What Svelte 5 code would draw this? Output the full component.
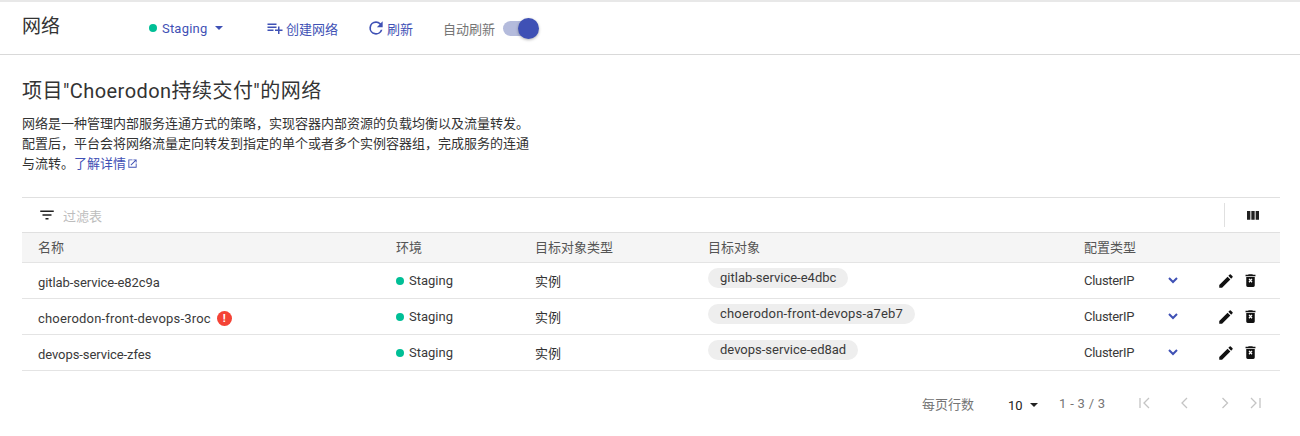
<script>
  const rows = [
    { name: 'gitlab-service-e82c9a', target: 'gitlab-service-e4dbc' },
    { name: 'choerodon-front-devops-3roc', target: 'choerodon-front-devops-a7eb7', error: true },
    { name: 'devops-service-zfes', target: 'devops-service-ed8ad' }
  ];
</script>

<div class="page">
  <header class="bar">
    <h1>网络</h1>
    <button class="env"><span class="dot"></span>Staging<svg class="caret" width="8" height="4" viewBox="0 0 8 4"><path d="M0 0h8L4 4z" fill="#3f51b5"/></svg></button>
    <button class="act create">
      <svg width="18" height="18" viewBox="0 0 24 24"><path fill="#3f51b5" d="M14 10H2v2h12v-2zm0-4H2v2h12V6zm4 8v-4h-2v4h-4v2h4v4h2v-4h4v-2h-4zM2 16h8v-2H2v2z"/></svg>创建网络
    </button>
    <button class="act refresh">
      <svg width="20" height="20" viewBox="0 0 24 24"><path fill="#3f51b5" d="M17.65 6.35A7.95 7.95 0 0 0 12 4a8 8 0 1 0 7.73 10h-2.08A6 6 0 1 1 12 6c1.66 0 3.14.69 4.22 1.78L13 11h7V4l-2.35 2.35z"/></svg>刷新
    </button>
    <div class="auto">
      <span>自动刷新</span>
      <span class="track"><span class="knob"></span></span>
    </div>
  </header>

  <main>
    <h2>项目"Choerodon持续交付"的网络</h2>
    <p class="desc">
      网络是一种管理内部服务连通方式的策略，实现容器内部资源的负载均衡以及流量转发。<br />
      配置后，平台会将网络流量定向转发到指定的单个或者多个实例容器组，完成服务的连通<br />
      与流转。<a href="#more">了解详情<svg width="11" height="11" viewBox="0 0 24 24"><path fill="#3f51b5" d="M19 19H5V5h7V3H3v18h18v-9h-2v7zM14 3v2h3.59l-9.83 9.83 1.41 1.41L19 6.41V10h2V3h-7z"/></svg></a>
    </p>

    <section class="table">
      <div class="filter">
        <svg width="18" height="18" viewBox="0 0 24 24"><path fill="#212121" d="M10 18h4v-2h-4v2zM3 6v2h18V6H3zm3 7h12v-2H6v2z"/></svg>
        <span class="ph">过滤表</span>
        <span class="sep"></span>
        <svg class="cols" width="16" height="16" viewBox="0 0 24 24"><path fill="#212121" d="M3 6h5v13H3zM9.5 6h5v13h-5zM16 6h5v13h-5z"/></svg>
      </div>
      <div class="row head">
        <div>名称</div><div>环境</div><div>目标对象类型</div><div>目标对象</div><div>配置类型</div>
      </div>
      {#each rows as r}
        <div class="row" class:wide={r.error}>
          <div class="name"><span class="label">{r.name}</span>{#if r.error}<span class="err">!</span>{/if}</div>
          <div class="envc"><span class="dot"></span>Staging</div>
          <div class="kind">实例</div>
          <div><span class="chip">{r.target}</span></div>
          <div class="cfg">
            <span class="type">ClusterIP</span>
            <svg class="chev" width="10" height="7" viewBox="0 0 10 7"><path d="M1 1l4 4 4-4" fill="none" stroke="#3f51b5" stroke-width="2"/></svg>
            <svg class="edit" width="18" height="18" viewBox="0 0 24 24"><path fill="#111" d="M3 17.25V21h3.75L17.81 9.94l-3.75-3.75L3 17.25zM20.71 7.04a1 1 0 0 0 0-1.41l-2.34-2.34a1 1 0 0 0-1.41 0l-1.83 1.83 3.75 3.75 1.83-1.83z"/></svg>
            <svg class="del" width="17" height="17" viewBox="0 0 24 24"><path fill="#111" d="M15.5 4l-1-1h-5l-1 1H5v2h14V4h-3.5zM6 19a2 2 0 0 0 2 2h8a2 2 0 0 0 2-2V7H6v12zm3.2-8.6l1.4-1.4L12 10.6 13.4 9l1.4 1.4-1.6 1.6 1.6 1.6-1.4 1.4-1.4-1.6-1.4 1.6-1.4-1.4 1.6-1.6-1.6-1.6z"/></svg>
          </div>
        </div>
      {/each}
      <div class="pager">
        <span class="rpp">每页行数</span>
        <span class="size">10<svg width="8" height="4" viewBox="0 0 8 4"><path d="M0 0h8L4 4z" fill="#222"/></svg></span>
        <span class="range">1 - 3 / 3</span>
        <span class="navs">
          <svg width="14" height="14" viewBox="0 0 14 14"><path d="M2 2v10M11 2L6 7l5 5" fill="none" stroke="#c4c4c4" stroke-width="1.3"/></svg>
          <svg width="14" height="14" viewBox="0 0 14 14"><path d="M9 2L4 7l5 5" fill="none" stroke="#c4c4c4" stroke-width="1.3"/></svg>
          <svg width="14" height="14" viewBox="0 0 14 14"><path d="M4.5 2l5 5-5 5" fill="none" stroke="#c4c4c4" stroke-width="1.3"/></svg>
          <svg class="last" width="14" height="14" viewBox="0 0 14 14"><path d="M3 2l5 5-5 5M12 2v10" fill="none" stroke="#c4c4c4" stroke-width="1.3"/></svg>
        </span>
      </div>
    </section>
  </main>
</div>

<style>
  :global(body) { margin: 0; background: #fff; }
  .page {
    width: 1300px; height: 436px; overflow: hidden; box-sizing: border-box;
    font-family: Roboto, "Noto Sans CJK SC", sans-serif;
    font-size: 13px; color: #3a3a3a; border-top: 2px solid #e8e8e8;
  }
  .bar {
    height: 53px; box-sizing: border-box; border-bottom: 1px solid #d9d9d9;
    display: flex; align-items: center; padding-left: 22px;
  }
  h1 { margin: 0 0 7px; width: 127px; font-size: 19px; font-weight: 400; color: #333; }
  button {
    border: 0; background: none; padding: 0; font: inherit; color: #3f51b5;
    display: inline-flex; align-items: center;
  }
  .env { width: 116.5px; letter-spacing: .2px; }
  .dot { width: 8px; height: 8px; border-radius: 50%; background: #00bf96; margin-right: 5px; display: inline-block; }
  .caret { margin-left: 8px; }
  .create { width: 100.8px; }
  .create svg { margin-right: 2.5px; }
  .refresh { width: 76.7px; }
  .refresh svg { margin-right: .7px; }
  .auto { display: flex; align-items: center; color: #757575; }
  .track { width: 35px; height: 15px; border-radius: 8px; background: #b4bbdc; margin-left: 8px; position: relative; }
  .knob {
    position: absolute; right: -1px; top: -3px; width: 21px; height: 21px; border-radius: 50%;
    background: #3f51b5; box-shadow: 0 1px 3px rgba(0,0,0,.3);
  }
  main { padding: 0 20px 0 22px; }
  h2 { margin: 24px 0 11px; font-size: 20px; letter-spacing: .45px; line-height: 24px; font-weight: 400; color: #333; }
  .desc { margin: 0 0 23px; line-height: 20px; font-size: 13px; color: #333; height: 60px; }
  a { color: #3f51b5; text-decoration: none; }
  a svg { vertical-align: -1px; margin-left: 1px; }
  .filter {
    height: 34px; border-top: 1px solid #e0e0e0; border-bottom: 1px solid #e0e0e0;
    display: flex; align-items: center; padding-left: 16px;
  }
  .ph { margin-left: 7px; color: #bdbdbd; flex: 1; }
  .sep { width: 1px; height: 24px; background: #e0e0e0; }
  .cols { margin: 0 19px 0 20px; }
  .row {
    display: grid; grid-template-columns: 358px 139px 173px 376px 212px;
    height: 36px; border-bottom: 1px solid #e4e4e4; box-sizing: border-box; align-items: center;
  }
  .row > div { padding-left: 16px; min-width: 0; }
  .head { height: 30px; background: #f5f5f5; color: #555; padding-bottom: 3px; }
  .name { display: flex; align-items: center; padding-top: 3px; }
  .label { letter-spacing: -.08px; }
  .wide .label, .wide .chip { letter-spacing: .18px; }
  .err {
    width: 15px; height: 15px; border-radius: 50%; background: #f44336; color: #fff;
    font-size: 11px; font-weight: 700; display: inline-flex; align-items: center; justify-content: center; margin-left: 6px;
  }
  .envc { display: flex; align-items: center; }
  .envc .dot { margin-right: 5px; }
  .kind { color: #333; }
  .chip {
    display: inline-block; height: 20px; line-height: 20px; padding: 0 12px; border-radius: 10px; background: #eee;
    position: relative; top: -3px;
  }
  .cfg { display: flex; align-items: center; }
  .type { width: 84px; letter-spacing: -.3px; }
  .chev { margin-right: 38.75px; }
  .edit { margin-right: 6.75px; }
  .pager { display: flex; align-items: center; height: 64px; padding-left: 900px; }
  .rpp { width: 86px; color: #757575; }
  .size { width: 51px; color: #222; display: inline-flex; align-items: center; position: relative; top: 2px; }
  .size svg { margin-left: 7px; }
  .range { width: 79px; color: #757575; letter-spacing: .3px; }
  .navs { display: flex; gap: 26px; }
  .last { margin-left: -10px; }
</style>
